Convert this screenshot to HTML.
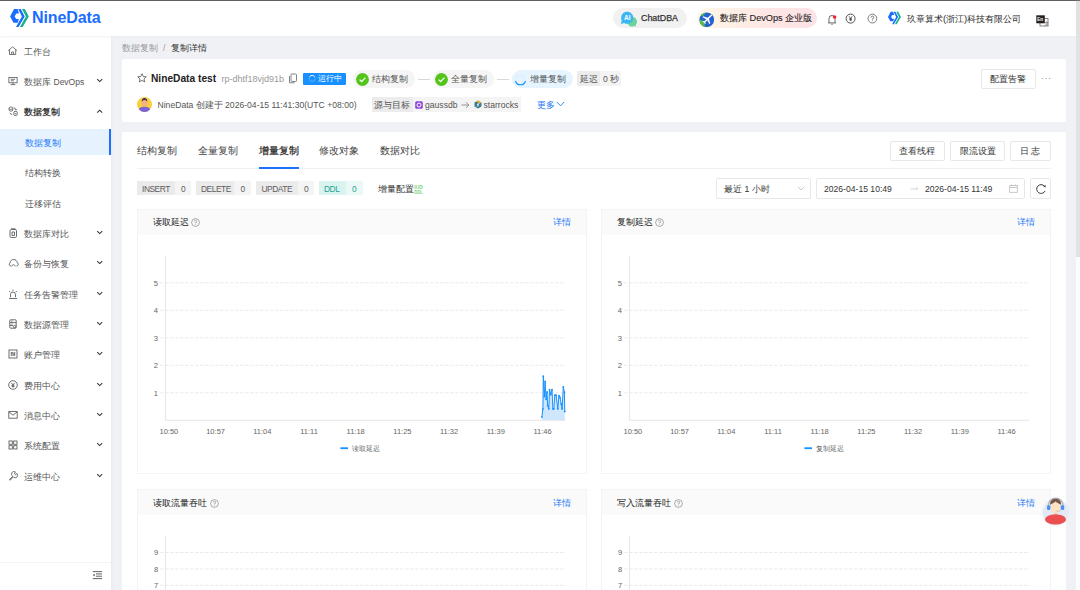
<!DOCTYPE html>
<html><head><meta charset="utf-8">
<style>
*{box-sizing:border-box;margin:0;padding:0}
html,body{width:1080px;height:590px;overflow:hidden;background:#f0f1f5;font-family:"Liberation Sans",sans-serif;color:#333}
.a{position:absolute;white-space:nowrap}
#top{position:absolute;left:0;top:0;width:1076px;height:36px;background:#fff;border-top:1px solid #606060;z-index:2;box-shadow:0 1px 2px rgba(0,0,0,0.02)}
#side{position:absolute;left:0;top:36px;width:111px;height:554px;background:#fff;box-shadow:1px 0 3px rgba(0,0,0,0.03);z-index:1}
#sb{position:absolute;left:1076px;top:0;width:4px;height:590px;background:#fdfdfd}
#sbt{position:absolute;left:1076px;top:1px;width:4px;height:256px;background:#e2e2e2}
.mi{position:absolute;left:0;width:111px;height:30px;font-size:9px;color:#555;line-height:30px}
.mi .t{position:absolute;left:24px;top:0}
.mi .ic{position:absolute;left:8px;top:10px;width:10px;height:10px}
.mi .ch{position:absolute;left:96px;top:12px;width:7px;height:5px}
.card{position:absolute;background:#fff;border-radius:2px}
.tag{position:absolute;height:14px;line-height:14px;font-size:7.5px;color:#666}
.btn{position:absolute;height:20px;border:1px solid #e8e8e8;border-radius:2px;background:#fff;font-size:8.6px;color:#333;text-align:center;line-height:18px}
.cc{position:absolute;border:1px solid #f3f3f3;background:#fff}
.cc .hd{position:absolute;left:0;top:0;right:0;height:25.2px;background:#fafafa}
.cc .ti{position:absolute;left:15px;top:0;line-height:26px;font-size:8.8px;color:#333}
.cc .dt{position:absolute;right:15px;top:0;line-height:26px;font-size:8.8px;color:#1f7af5}
</style></head><body>
<div id="top">
<svg class="a" style="left:6px;top:5px" width="30" height="24" viewBox="0 0 30 24"><path fill="#1a6dff" d="M4.1,10.4 L8,3 L11.6,3 L13,7.6 L10.2,7.6 L8.7,10.4 L10.2,13 L12.8,13 L11.8,16.7 L7.5,16.7 Z"/><path fill="#1a6dff" d="M12.2,3 L14.8,3 L18.7,10.4 L12.6,20.9 L10,20.9 L15.9,10.4 Z"/><path fill="#17b288" d="M16,3 L18.9,3 L22.8,10.4 L16.7,20.9 L14,20.9 L19.9,10.4 Z"/></svg>
<div class="a" style="left:32px;top:8px;font-size:16px;line-height:18px;font-weight:700;color:#1a6dff;letter-spacing:-0.1px">NineData</div>
<div class="a" style="left:613px;top:7px;width:74px;height:20px;border-radius:10px;background:#f1f1f2"></div>
<svg class="a" style="left:619px;top:9px" width="18" height="18" viewBox="0 0 18 18"><path fill="#68d39a" d="M8.2,12.2 A4.9,4.9 0 1,1 16.6,15 L17.3,16.5 L15.2,16.1 A4.9,4.9 0 0,1 8.2,12.2 Z"/><path fill="#3bb6f3" d="M2.1,7.7 A6.1,6.1 0 1,1 5.1,13 L1.8,13.9 L2.7,10.6 A6.1,6.1 0 0,1 2.1,7.7 Z"/><text x="8.2" y="10.2" font-size="6.6" font-weight="700" fill="#fff" text-anchor="middle" font-family="Liberation Sans">AI</text></svg>
<div class="a" style="left:641px;top:11px;font-size:8.9px;line-height:12px;color:#333;-webkit-text-stroke:0.25px #333">ChatDBA</div>
<div class="a" style="left:697px;top:7px;width:120px;height:20px;border-radius:10px;background:linear-gradient(90deg,#fdf8e6,#fde6e4 60%,#fde2e6)"></div>
<svg class="a" style="left:699.3px;top:10.6px" width="15.5" height="15.5" viewBox="0 0 16 16"><circle cx="8" cy="8" r="7.6" fill="#2463d1"/><path fill="#56bb4a" d="M0.6,8.5 C2.2,7.8 4.2,9 5.2,10.2 C6.3,11.6 5.6,13.6 6.4,15.5 C3.2,15 1,12.2 0.6,8.5Z"/><path fill="#56bb4a" d="M2.2,3.5 C3.5,2 5,1.3 6.5,0.9 C6.2,2.3 5,3.8 3.4,4.4Z"/><path fill="#fff" d="M12.8,2.4 L13.7,3.3 L10.3,6.9 L11.6,11.8 L10.6,12.4 L8.6,8.5 L6.6,10.5 L6.9,12 L6.1,12.5 L5.3,10.8 L3.6,10 L4.1,9.2 L5.6,9.5 L7.6,7.5 L3.7,5.5 L4.2,4.5 L9.1,5.9 Z"/></svg>
<div class="a" style="left:720px;top:11px;font-size:9.2px;line-height:12px;color:#222;-webkit-text-stroke:0.1px #222">数据库</div><div class="a" style="left:749.5px;top:11px;font-size:9.2px;line-height:12px;color:#222;-webkit-text-stroke:0.1px #222">DevOps</div><div class="a" style="left:785.3px;top:11px;font-size:9.2px;line-height:12px;color:#222;-webkit-text-stroke:0.1px #222">企业版</div>
<svg class="a" style="left:826px;top:12px" width="12" height="13" viewBox="0 0 12 13"><path fill="none" stroke="#444" stroke-width="0.8" d="M3,9.8 L3,5.5 A3,3 0 0,1 9,5.5 L9,9.8 M2,9.9 L10,9.9 M5.2,11.2 L6.8,11.2"/><circle cx="8.6" cy="4" r="1.8" fill="#f5222d"/></svg>
<svg class="a" style="left:845px;top:12.2px" width="11" height="11" viewBox="0 0 11 11"><circle cx="5.6" cy="5.6" r="4.5" fill="none" stroke="#333" stroke-width="0.85"/><path fill="none" stroke="#333" stroke-width="0.75" d="M4,3.3 L5.6,5.4 L7.2,3.3 M5.6,5.4 L5.6,8 M4.2,5.8 L7,5.8 M4.2,6.9 L7,6.9"/></svg>
<svg class="a" style="left:867px;top:12.2px" width="11" height="11" viewBox="0 0 11 11"><circle cx="5.4" cy="5.6" r="4.4" fill="none" stroke="#555" stroke-width="0.75"/><path fill="none" stroke="#555" stroke-width="0.75" d="M4.1,4.5 A1.35,1.35 0 1,1 5.4,5.9 L5.4,6.6"/><circle cx="5.4" cy="7.8" r="0.45" fill="#555"/></svg>
<svg class="a" style="left:886.5px;top:9px" width="16" height="16" viewBox="0 0 30 30"><g transform="translate(-3.5,-0.5) scale(1.3)"><path fill="#1a6dff" d="M4.1,10.4 L8,3 L11.6,3 L13,7.6 L10.2,7.6 L8.7,10.4 L10.2,13 L12.8,13 L11.8,16.7 L7.5,16.7 Z"/><path fill="#1a6dff" d="M12.2,3 L14.8,3 L18.7,10.4 L12.6,20.9 L10,20.9 L15.9,10.4 Z"/><path fill="#17b288" d="M16,3 L18.9,3 L22.8,10.4 L16.7,20.9 L14,20.9 L19.9,10.4 Z"/></g></svg>
<div class="a" style="left:907px;top:11px;font-size:9.4px;line-height:13px;color:#2a2a2a">玖章算术</div><div class="a" style="left:943px;top:11px;font-size:9.4px;line-height:13px;color:#2a2a2a">(</div><div class="a" style="left:946.1px;top:11px;font-size:9.4px;line-height:13px;color:#2a2a2a">浙江</div><div class="a" style="left:964.1px;top:11px;font-size:9.4px;line-height:13px;color:#2a2a2a">)</div><div class="a" style="left:967.2px;top:11px;font-size:9.4px;line-height:13px;color:#2a2a2a">科技有限公司</div>
<svg class="a" style="left:1036px;top:14px" width="13" height="12" viewBox="0 0 13 12"><rect x="4" y="3.5" width="8" height="7.5" fill="#fff" stroke="#555" stroke-width="0.7"/><text x="8.3" y="9.5" font-size="5" fill="#333" font-family="Liberation Sans">文</text><rect x="0.3" y="0.3" width="8.5" height="8" fill="#222"/><text x="1.3" y="6.3" font-size="4.5" font-weight="700" fill="#fff" font-family="Liberation Sans">En</text></svg>
</div>
<div id="side">
<div class="a" style="left:0;top:0;width:111px;height:2px;background:linear-gradient(#f6f7f7,#fcfcfc)"></div><svg class="a" style="left:7px;top:10px" width="11" height="10" viewBox="0 0 11 10"><path stroke="#555" stroke-width="0.8" fill="none" stroke-linejoin="round" d="M1.2,4.7 L5.6,0.8 L10,4.7 M2.5,3.8 L2.5,8.5 L8.7,8.5 L8.7,3.8 M4.6,8.5 L4.6,6 L6.6,6 L6.6,8.5"/></svg><div class="a" style="left:24px;top:9.5px;font-size:9px;line-height:12px;color:#555">工作台</div>
<svg class="a" style="left:7.5px;top:40px" width="10" height="10" viewBox="0 0 10 10"><rect stroke="#555" stroke-width="0.8" fill="none" x="0.9" y="1.4" width="8.2" height="5.4"/><path stroke="#555" stroke-width="0.8" fill="none" d="M5,6.8 L5,8.6 M2.6,8.6 L7.4,8.6 M2.8,3.3 L7.2,3.3 M2.8,4.8 L5.8,4.8"/></svg><div class="a" style="left:24px;top:39.5px;font-size:9px;line-height:12px;color:#555">数据库</div><div class="a" style="left:53.5px;top:39.8px;font-size:8.5px;line-height:12px;color:#555">DevOps</div><svg class="a" style="left:96px;top:42px" width="7" height="5" viewBox="0 0 7 5"><path d="M1.2,1.2 L3.7,3.6 L6.2,1.2" fill="none" stroke="#333" stroke-width="1.05"/></svg>
<svg class="a" style="left:7.5px;top:70px" width="10" height="10" viewBox="0 0 10 10"><rect x="1.1" y="1.1" width="3.6" height="4" rx="1.3" fill="none" stroke="#555" stroke-width="0.85"/><path d="M1.1,2.6 A1.8,0.8 0 0,0 4.7,2.6" fill="none" stroke="#555" stroke-width="0.7"/><rect x="5.9" y="5.4" width="3.3" height="4" rx="0.9" fill="none" stroke="#555" stroke-width="0.85"/><path d="M6.8,7.6 L8.3,7.6" stroke="#555" stroke-width="0.7"/><path d="M5.7,1.8 Q7.3,1.8 7.8,3.5" fill="none" stroke="#555" stroke-width="0.8"/><path d="M7,3.2 L7.9,4.2 L8.7,3" fill="#555" stroke="#555" stroke-width="0.4"/><path d="M1.8,6.8 Q2.3,8.5 4.3,8.6" fill="none" stroke="#555" stroke-width="0.8"/></svg><div class="a" style="left:24px;top:69.5px;font-size:9px;line-height:12px;color:#1a1a1a;font-weight:500;-webkit-text-stroke:0.2px #1a1a1a">数据复制</div><svg class="a" style="left:96px;top:73px" width="7" height="5" viewBox="0 0 7 5"><path d="M1.2,3.6 L3.7,1.2 L6.2,3.6" fill="none" stroke="#333" stroke-width="1.05"/></svg>
<svg class="a" style="left:7.5px;top:192px" width="10" height="10" viewBox="0 0 10 10"><rect stroke="#555" stroke-width="0.85" fill="none" x="2" y="1.5" width="6.5" height="8" rx="1.3"/><path stroke="#555" stroke-width="0.85" fill="none" d="M3,0.8 L7.5,0.8 M4,4 L6.5,4 L6.5,7.5 L4,7.5 Z"/></svg><div class="a" style="left:24px;top:191.5px;font-size:9px;line-height:12px;color:#555">数据库对比</div><svg class="a" style="left:96px;top:194px" width="7" height="5" viewBox="0 0 7 5"><path d="M1.2,1.2 L3.7,3.6 L6.2,1.2" fill="none" stroke="#333" stroke-width="1.05"/></svg>
<svg class="a" style="left:7.8px;top:222px" width="11" height="10" viewBox="0 0 10 10"><path stroke="#555" stroke-width="0.85" fill="none" d="M2.6,8 C0.6,8 0,5.8 1.6,5 C1.6,2.4 3.6,1.4 5.2,1.6 C7,1.5 8.6,2.8 8.7,4.6 C10.4,5.2 10.2,8 8,8 M3.3,8.4 C3.4,6.2 6.6,6.2 6.7,8.4"/></svg><div class="a" style="left:24px;top:221.5px;font-size:9px;line-height:12px;color:#555">备份与恢复</div><svg class="a" style="left:96px;top:224px" width="7" height="5" viewBox="0 0 7 5"><path d="M1.2,1.2 L3.7,3.6 L6.2,1.2" fill="none" stroke="#333" stroke-width="1.05"/></svg>
<svg class="a" style="left:7.5px;top:253px" width="10" height="10" viewBox="0 0 10 10"><path stroke="#555" stroke-width="0.85" fill="none" d="M2.5,8.2 L2.5,5.5 A2.5,2.5 0 0,1 7.5,5.5 L7.5,8.2 M1,9.5 L9,9.5 M5,0.5 L5,1.8 M1.2,2 L2.2,3 M8.8,2 L7.8,3"/></svg><div class="a" style="left:24px;top:252.5px;font-size:9px;line-height:12px;color:#555">任务告警管理</div><svg class="a" style="left:96px;top:255px" width="7" height="5" viewBox="0 0 7 5"><path d="M1.2,1.2 L3.7,3.6 L6.2,1.2" fill="none" stroke="#333" stroke-width="1.05"/></svg>
<svg class="a" style="left:7.5px;top:283px" width="10" height="10" viewBox="0 0 10 10"><rect stroke="#555" stroke-width="0.85" fill="none" x="1.8" y="0.8" width="6.4" height="8.4" rx="0.8"/><path stroke="#555" stroke-width="0.85" fill="none" d="M1.8,3.6 L8.2,3.6 M1.8,6.4 L5,6.4 M3.3,2.2 L4.5,2.2 M3.3,5 L4.5,5"/><circle stroke="#555" stroke-width="0.85" fill="none" cx="6.6" cy="7.6" r="1.2"/></svg><div class="a" style="left:24px;top:282.5px;font-size:9px;line-height:12px;color:#555">数据源管理</div><svg class="a" style="left:96px;top:285px" width="7" height="5" viewBox="0 0 7 5"><path d="M1.2,1.2 L3.7,3.6 L6.2,1.2" fill="none" stroke="#333" stroke-width="1.05"/></svg>
<svg class="a" style="left:7.5px;top:313px" width="10" height="10" viewBox="0 0 10 10"><rect stroke="#555" stroke-width="0.85" fill="none" x="1" y="1" width="8" height="8"/><path stroke="#555" stroke-width="0.85" fill="none" d="M3.3,3 L3.3,7 M6.7,3 L6.7,7 M3.3,4 L5,4 M5,3 L5,7 M6.7,5 L5.2,6"/></svg><div class="a" style="left:24px;top:312.5px;font-size:9px;line-height:12px;color:#555">账户管理</div><svg class="a" style="left:96px;top:315px" width="7" height="5" viewBox="0 0 7 5"><path d="M1.2,1.2 L3.7,3.6 L6.2,1.2" fill="none" stroke="#333" stroke-width="1.05"/></svg>
<svg class="a" style="left:7.5px;top:344px" width="10" height="10" viewBox="0 0 10 10"><circle stroke="#555" stroke-width="0.85" fill="none" cx="5" cy="5" r="4.3"/><path stroke="#555" stroke-width="0.85" fill="none" d="M3.3,2.8 L5,5 L6.7,2.8 M5,5 L5,7.6 M3.6,5.3 L6.4,5.3 M3.6,6.4 L6.4,6.4"/></svg><div class="a" style="left:24px;top:343.5px;font-size:9px;line-height:12px;color:#555">费用中心</div><svg class="a" style="left:96px;top:346px" width="7" height="5" viewBox="0 0 7 5"><path d="M1.2,1.2 L3.7,3.6 L6.2,1.2" fill="none" stroke="#333" stroke-width="1.05"/></svg>
<svg class="a" style="left:7.5px;top:374px" width="10" height="10" viewBox="0 0 10 10"><rect stroke="#555" stroke-width="0.85" fill="none" x="0.8" y="1.6" width="8.4" height="6.6"/><path stroke="#555" stroke-width="0.85" fill="none" d="M1,2 L5,5.2 L9,2"/></svg><div class="a" style="left:24px;top:373.5px;font-size:9px;line-height:12px;color:#555">消息中心</div><svg class="a" style="left:96px;top:376px" width="7" height="5" viewBox="0 0 7 5"><path d="M1.2,1.2 L3.7,3.6 L6.2,1.2" fill="none" stroke="#333" stroke-width="1.05"/></svg>
<svg class="a" style="left:7.5px;top:404px" width="10" height="10" viewBox="0 0 10 10"><rect stroke="#555" stroke-width="0.85" fill="none" x="1" y="1" width="3.3" height="3.3"/><rect stroke="#555" stroke-width="0.85" fill="none" x="5.7" y="1" width="3.3" height="3.3"/><rect stroke="#555" stroke-width="0.85" fill="none" x="1" y="5.7" width="3.3" height="3.3"/><rect stroke="#555" stroke-width="0.85" fill="none" x="5.7" y="5.7" width="3.3" height="3.3"/></svg><div class="a" style="left:24px;top:403.5px;font-size:9px;line-height:12px;color:#555">系统配置</div><svg class="a" style="left:96px;top:406px" width="7" height="5" viewBox="0 0 7 5"><path d="M1.2,1.2 L3.7,3.6 L6.2,1.2" fill="none" stroke="#333" stroke-width="1.05"/></svg>
<svg class="a" style="left:7.5px;top:435px" width="10" height="10" viewBox="0 0 10 10"><path stroke="#555" stroke-width="0.85" fill="none" d="M1.2,8.8 L4.8,5.2 M1.8,9.5 L5.4,5.8 M4.5,5 A2.4,2.4 0 0,1 7.5,1 L6.4,2.8 L7.3,3.7 L9,2.6 A2.4,2.4 0 0,1 5.5,6"/></svg><div class="a" style="left:24px;top:434.5px;font-size:9px;line-height:12px;color:#555">运维中心</div><svg class="a" style="left:96px;top:437px" width="7" height="5" viewBox="0 0 7 5"><path d="M1.2,1.2 L3.7,3.6 L6.2,1.2" fill="none" stroke="#333" stroke-width="1.05"/></svg>
<div class="a" style="left:0;top:93px;width:111px;height:26px;background:#e6f3ff;border-right:2px solid #1f6fff"></div><div class="a" style="left:25px;top:100.5px;font-size:9px;line-height:12px;color:#1f7af5">数据复制</div>
<div class="a" style="left:25px;top:130.5px;font-size:9px;line-height:12px;color:#555">结构转换</div>
<div class="a" style="left:25px;top:161.5px;font-size:9px;line-height:12px;color:#555">迁移评估</div>
<div class="a" style="left:0;top:526px;width:111px;height:1px;background:#f3f3f3"></div><svg class="a" style="left:91.5px;top:535px" width="11" height="10" viewBox="0 0 11 10"><path d="M0.8,0.6 L10,0.6 M4,2.9 L10,2.9 M4,5.2 L10,5.2 M0.8,7.6 L10,7.6" fill="none" stroke="#444" stroke-width="0.85"/><path d="M2.6,2.8 L0.9,4.1 L2.6,5.4Z" fill="#444"/></svg>
</div>
<div id="sb"></div><div id="sbt"></div><div class="a" style="left:1076px;top:0;width:4px;height:1px;background:#707070;z-index:3"></div>
<div class="a" style="left:121.8px;top:42px;font-size:8.5px;color:#999;line-height:12px">数据复制</div><div class="a" style="left:163px;top:42px;font-size:8.5px;color:#999;line-height:12px">/</div><div class="a" style="left:171.3px;top:42px;font-size:8.5px;color:#333;line-height:12px">复制详情</div>
<div class="card" style="left:122px;top:59px;width:944px;height:63px"></div>
<svg class="a" style="left:136.6px;top:73.2px" width="10" height="10" viewBox="0 0 11 11"><path fill="none" stroke="#444" stroke-width="0.8" stroke-linejoin="round" d="M5.5,0.8 L6.9,3.9 L10.2,4.2 L7.7,6.4 L8.4,9.8 L5.5,8.1 L2.6,9.8 L3.3,6.4 L0.8,4.2 L4.1,3.9 Z"/></svg>
<div class="a" style="left:151px;top:72px;font-size:10.2px;line-height:13px;font-weight:700;color:#222">NineData test</div>
<div class="a" style="left:221.5px;top:73px;font-size:9px;line-height:12px;color:#999">rp-dhtf18vjd91b</div>
<svg class="a" style="left:288px;top:73px" width="10" height="11" viewBox="0 0 10 11"><rect x="3" y="1" width="5.5" height="7.5" rx="0.8" fill="none" stroke="#777" stroke-width="0.9"/><path d="M1.5,3 L1.5,9.8 L6.5,9.8" fill="none" stroke="#777" stroke-width="0.9"/></svg>
<div class="a" style="left:302.5px;top:72.5px;width:43px;height:12.7px;background:#1890ff;border-radius:1px"></div>
<svg class="a" style="left:307.5px;top:74.2px" width="9" height="9" viewBox="0 0 9 9"><circle cx="4.2" cy="4.4" r="3" fill="none" stroke="#6fb8ff" stroke-width="0.8"/><path d="M1.8,2.6 A3,3 0 0,1 6.6,2.6" fill="none" stroke="#fff" stroke-width="0.9"/></svg>
<div class="a" style="left:318px;top:73px;font-size:7.6px;line-height:12px;color:#fff">运行中</div>
<div class="a" style="left:353px;top:70px;width:62px;height:18px;border-radius:9px;background:#f5f5f5"></div>
<svg class="a" style="left:355.5px;top:72.5px" width="13" height="13" viewBox="0 0 13 13"><circle cx="6.5" cy="6.5" r="6.4" fill="#52c41a"/><path d="M3.6,6.6 L5.6,8.6 L9.4,4.6" fill="none" stroke="#fff" stroke-width="1.2"/></svg>
<div class="a" style="left:372px;top:73px;font-size:8.8px;line-height:12px;color:#555">结构复制</div>
<div class="a" style="left:418px;top:79px;width:12px;height:1px;background:#d9d9d9"></div>
<div class="a" style="left:432.5px;top:70px;width:61px;height:18px;border-radius:9px;background:#f5f5f5"></div>
<svg class="a" style="left:435px;top:72.5px" width="13" height="13" viewBox="0 0 13 13"><circle cx="6.5" cy="6.5" r="6.4" fill="#52c41a"/><path d="M3.6,6.6 L5.6,8.6 L9.4,4.6" fill="none" stroke="#fff" stroke-width="1.2"/></svg>
<div class="a" style="left:451px;top:73px;font-size:8.8px;line-height:12px;color:#555">全量复制</div>
<div class="a" style="left:497px;top:79px;width:12px;height:1px;background:#d9d9d9"></div>
<div class="a" style="left:512px;top:70px;width:60.5px;height:18px;border-radius:9px;background:#e6f4ff"></div>
<svg class="a" style="left:514px;top:72.5px" width="13" height="13" viewBox="0 0 13 13"><path d="M1.5,8 A5.2,5.2 0 0,0 11.5,8" fill="none" stroke="#1890ff" stroke-width="1.1"/><path d="M11.5,6 A5.2,5.2 0 0,0 1.5,6" fill="none" stroke="#d6ebff" stroke-width="1"/></svg>
<div class="a" style="left:529.5px;top:73px;font-size:8.8px;line-height:12px;color:#555">增量复制</div>
<div class="a" style="left:577px;top:71px;width:23px;height:15px;background:#ececec"></div>
<div class="a" style="left:600px;top:71px;width:21px;height:15px;background:#f4f4f4"></div>
<div class="a" style="left:580px;top:73px;font-size:8.6px;line-height:12px;color:#555">延迟</div>
<div class="a" style="left:603px;top:73px;font-size:8.6px;line-height:12px;color:#555">0</div><div class="a" style="left:610.2px;top:73px;font-size:8.6px;line-height:12px;color:#555">秒</div>
<div class="btn" style="left:980.5px;top:68.8px;width:55px;height:20px">配置告警</div>
<div class="a" style="left:1041px;top:72px;font-size:9px;line-height:12px;color:#888;letter-spacing:0.5px">···</div>
<svg class="a" style="left:136.5px;top:97px" width="15" height="15" viewBox="0 0 15 15"><defs><clipPath id="av"><circle cx="7.5" cy="7.5" r="7.5"/></clipPath></defs><g clip-path="url(#av)"><rect width="15" height="15" fill="#f8cf40"/><path d="M1,15 C1.5,11 4,9.8 7.5,9.8 C11,9.8 13.5,11 14,15Z" fill="#7a62d8"/><ellipse cx="7.5" cy="6" rx="2.6" ry="3.3" fill="#f4b08a"/><path d="M4.8,5 C4.6,2 6,1 7.5,1 C9,1 10.4,2 10.2,5 C9.5,3.5 8.5,3 7.5,3 C6.5,3 5.5,3.5 4.8,5Z" fill="#3e2d5a"/></g></svg>
<div class="a" style="left:157.5px;top:98.5px;font-size:8.6px;line-height:12px;color:#555">NineData</div><div class="a" style="left:195.7px;top:98.5px;font-size:8.6px;line-height:12px;color:#555">创建于</div><div class="a" style="left:225.1px;top:98.5px;font-size:8.6px;line-height:12px;color:#555">2026-04-15 11:41:30(UTC +08:00)</div>
<div class="a" style="left:371.5px;top:97px;width:41px;height:15.4px;background:#ececec"></div>
<div class="a" style="left:412.5px;top:97px;width:108px;height:15.4px;background:#f4f4f4"></div>
<div class="a" style="left:374px;top:98.5px;font-size:8.7px;line-height:12px;color:#555">源与目标</div>
<svg class="a" style="left:415px;top:100.5px" width="8" height="8" viewBox="0 0 8 8"><rect x="0.2" y="0.2" width="7.6" height="7.6" rx="1.5" fill="#8b45d8"/><circle cx="4" cy="4" r="2" fill="none" stroke="#fff" stroke-width="1"/></svg>
<div class="a" style="left:425px;top:98.5px;font-size:8.6px;line-height:12px;color:#555">gaussdb</div>
<svg class="a" style="left:460.5px;top:100.5px" width="9" height="8" viewBox="0 0 9 8"><path d="M0.5,4 L7.8,4 M5,1.2 L7.8,4 L5,6.8" fill="none" stroke="#777" stroke-width="0.75"/></svg>
<svg class="a" style="left:473.5px;top:100.3px" width="8" height="9" viewBox="0 0 8 9"><path d="M4,0.4 L7.5,2.4 L7.5,6.6 L4,8.6 L0.5,6.6 L0.5,2.4Z" fill="#3a7d99"/><path d="M4,0.4 L7.5,2.4 L5.5,3.5 L2.2,1.5Z" fill="#f2b526"/><path d="M5.3,3.3 L3,4.6 L4.8,5 L2.8,6.6" fill="none" stroke="#fff" stroke-width="0.8"/></svg>
<div class="a" style="left:483.5px;top:98.5px;font-size:8.6px;line-height:12px;color:#555">starrocks</div>
<div class="a" style="left:536.5px;top:98.5px;font-size:8.8px;line-height:12px;color:#1f7af5">更多</div>
<svg class="a" style="left:556px;top:101px" width="9" height="6" viewBox="0 0 9 6"><path d="M0.8,1 L4.5,4.8 L8.2,1" fill="none" stroke="#1f7af5" stroke-width="0.9"/></svg>
<div class="card" style="left:122px;top:132px;width:944px;height:470px"></div>
<div class="a" style="left:137px;top:143.5px;font-size:10px;line-height:13px;color:#444">结构复制</div>
<div class="a" style="left:198px;top:143.5px;font-size:10px;line-height:13px;color:#444">全量复制</div>
<div class="a" style="left:258.5px;top:143.5px;font-size:10px;line-height:13px;color:#1a1a1a;font-weight:500;-webkit-text-stroke:0.2px #1a1a1a">增量复制</div>
<div class="a" style="left:319px;top:143.5px;font-size:10px;line-height:13px;color:#444">修改对象</div>
<div class="a" style="left:380px;top:143.5px;font-size:10px;line-height:13px;color:#444">数据对比</div>
<div class="a" style="left:137px;top:168px;width:914px;height:1px;background:#f0f0f0"></div>
<div class="a" style="left:258.5px;top:166.8px;width:40px;height:1.8px;background:#1f6fff"></div>
<div class="btn" style="left:889.5px;top:140.5px;width:55px;height:20px">查看线程</div>
<div class="btn" style="left:950px;top:140.5px;width:55px;height:20px">限流设置</div>
<div class="btn" style="left:1010px;top:140.5px;width:40.5px;height:20px;letter-spacing:2px;text-indent:2px">日志</div>
<div class="a" style="left:137px;top:181.3px;width:38px;height:14px;background:#ebebeb"></div>
<div class="a" style="left:175px;top:181.3px;width:16px;height:14px;background:#f4f4f4"></div>
<div class="a" style="left:142px;top:182.5px;font-size:8.4px;line-height:12px;color:#5c5c5c;letter-spacing:-0.45px">INSERT</div>
<div class="a" style="left:181px;top:182.5px;font-size:8.4px;line-height:12px;color:#5c5c5c">0</div>
<div class="a" style="left:196px;top:181.3px;width:38px;height:14px;background:#ebebeb"></div>
<div class="a" style="left:234px;top:181.3px;width:17px;height:14px;background:#f4f4f4"></div>
<div class="a" style="left:201px;top:182.5px;font-size:8.4px;line-height:12px;color:#5c5c5c;letter-spacing:-0.45px">DELETE</div>
<div class="a" style="left:240.5px;top:182.5px;font-size:8.4px;line-height:12px;color:#5c5c5c">0</div>
<div class="a" style="left:256.3px;top:181.3px;width:41.5px;height:14px;background:#ebebeb"></div>
<div class="a" style="left:297.8px;top:181.3px;width:16.2px;height:14px;background:#f4f4f4"></div>
<div class="a" style="left:261.5px;top:182.5px;font-size:8.4px;line-height:12px;color:#5c5c5c;letter-spacing:-0.45px">UPDATE</div>
<div class="a" style="left:304px;top:182.5px;font-size:8.4px;line-height:12px;color:#5c5c5c">0</div>
<div class="a" style="left:319px;top:181.3px;width:27px;height:14px;background:#d9f3ef"></div>
<div class="a" style="left:346px;top:181.3px;width:16.5px;height:14px;background:#ebf8f6"></div>
<div class="a" style="left:324px;top:182.5px;font-size:8.4px;line-height:12px;color:#25a594;letter-spacing:-0.45px">DDL</div>
<div class="a" style="left:352px;top:182.5px;font-size:8.4px;line-height:12px;color:#25a594">0</div>
<div class="a" style="left:377.5px;top:182.5px;font-size:8.8px;line-height:12px;color:#333;font-weight:500">增量配置</div>
<svg class="a" style="left:413.5px;top:184.5px" width="9" height="10" viewBox="0 0 9 10"><text x="0.3" y="4.4" font-size="5" font-weight="700" fill="#7bd47b" font-family="Liberation Sans" textLength="8.4" lengthAdjust="spacingAndGlyphs">IUD</text><text x="0.3" y="9.4" font-size="5" font-weight="700" fill="#7bd47b" font-family="Liberation Sans" textLength="8.4" lengthAdjust="spacingAndGlyphs">DDL</text></svg>
<div class="a" style="left:716px;top:178.2px;width:95px;height:20.4px;border:1px solid #e8e8e8;border-radius:2px;background:#fff"></div>
<div class="a" style="left:724px;top:182.5px;font-size:8.7px;line-height:12px;color:#333">最近</div><div class="a" style="left:744.4px;top:182.5px;font-size:8.7px;line-height:12px;color:#333">1</div><div class="a" style="left:751.7px;top:182.5px;font-size:8.7px;line-height:12px;color:#333">小时</div>
<svg class="a" style="left:797px;top:185.5px" width="8" height="5" viewBox="0 0 8 5"><path d="M0.8,0.8 L4,4 L7.2,0.8" fill="none" stroke="#bbb" stroke-width="0.8"/></svg>
<div class="a" style="left:816px;top:178.2px;width:208.5px;height:20.4px;border:1px solid #e8e8e8;border-radius:2px;background:#fff"></div>
<div class="a" style="left:824px;top:182.5px;font-size:8.6px;line-height:12px;color:#333">2026-04-15 10:49</div>
<svg class="a" style="left:910px;top:186px" width="9" height="5" viewBox="0 0 9 5"><path d="M0.5,3 L8,3 M6,1.2 L8,3" fill="none" stroke="#ccc" stroke-width="0.8"/></svg>
<div class="a" style="left:925px;top:182.5px;font-size:8.6px;line-height:12px;color:#333">2026-04-15 11:49</div>
<svg class="a" style="left:1009px;top:183.5px" width="9" height="9" viewBox="0 0 9 9"><rect x="0.7" y="1.5" width="7.6" height="6.8" fill="none" stroke="#bbb" stroke-width="0.8"/><path d="M0.7,3.5 L8.3,3.5 M2.5,0.5 L2.5,2 M6.5,0.5 L6.5,2" fill="none" stroke="#bbb" stroke-width="0.8"/></svg>
<div class="a" style="left:1030px;top:178.2px;width:20.5px;height:20.4px;border:1px solid #e8e8e8;border-radius:2px;background:#fff"></div>
<svg class="a" style="left:1034.5px;top:182.5px" width="12" height="12" viewBox="0 0 12 12"><path d="M10.1,7.9 A4.4,4.4 0 1,1 9.4,3.1" fill="none" stroke="#333" stroke-width="0.95"/><path d="M10.6,2 L10.5,4.5 L8.3,3.5Z" fill="#333"/></svg>
<div class="cc" style="left:137px;top:208.5px;width:449.5px;height:265px"><div class="hd"></div></div>
<div class="a" style="left:152.5px;top:215.5px;font-size:8.8px;line-height:12px;color:#222;font-weight:500">读取延迟</div><svg class="a" style="left:191px;top:217.5px" width="9" height="9" viewBox="0 0 9 9"><circle cx="4.5" cy="4.5" r="3.9" fill="none" stroke="#888" stroke-width="0.7"/><path d="M3.3,3.5 A1.2,1.2 0 1,1 4.5,4.7 L4.5,5.4" fill="none" stroke="#888" stroke-width="0.7"/><circle cx="4.5" cy="6.5" r="0.4" fill="#888"/></svg><div class="a" style="left:553px;top:215.5px;font-size:8.8px;line-height:12px;color:#1f7af5">详情</div>
<svg class="a" style="left:137px;top:240px" width="450" height="220" viewBox="137 240 450 220"><line x1="165.4" y1="255.6" x2="165.4" y2="420.3" stroke="#e6e6e6" stroke-width="1"/><line x1="165.4" y1="420.3" x2="565.4" y2="420.3" stroke="#e6e6e6" stroke-width="1"/><line x1="160.1" y1="392.8" x2="565.4" y2="392.8" stroke="#e6e6e6" stroke-width="0.8" stroke-dasharray="3.5,1.5"/><text x="158" y="395.5" font-size="7.6" fill="#666" text-anchor="end" font-family="Liberation Sans">1</text><line x1="160.1" y1="365.3" x2="565.4" y2="365.3" stroke="#e6e6e6" stroke-width="0.8" stroke-dasharray="3.5,1.5"/><text x="158" y="368.0" font-size="7.6" fill="#666" text-anchor="end" font-family="Liberation Sans">2</text><line x1="160.1" y1="337.8" x2="565.4" y2="337.8" stroke="#e6e6e6" stroke-width="0.8" stroke-dasharray="3.5,1.5"/><text x="158" y="340.5" font-size="7.6" fill="#666" text-anchor="end" font-family="Liberation Sans">3</text><line x1="160.1" y1="310.3" x2="565.4" y2="310.3" stroke="#e6e6e6" stroke-width="0.8" stroke-dasharray="3.5,1.5"/><text x="158" y="313.0" font-size="7.6" fill="#666" text-anchor="end" font-family="Liberation Sans">4</text><line x1="160.1" y1="282.8" x2="565.4" y2="282.8" stroke="#e6e6e6" stroke-width="0.8" stroke-dasharray="3.5,1.5"/><text x="158" y="285.5" font-size="7.6" fill="#666" text-anchor="end" font-family="Liberation Sans">5</text><text x="168.9" y="434" font-size="7.5" fill="#666" text-anchor="middle" font-family="Liberation Sans">10:50</text><text x="215.60000000000002" y="434" font-size="7.5" fill="#666" text-anchor="middle" font-family="Liberation Sans">10:57</text><text x="262.3" y="434" font-size="7.5" fill="#666" text-anchor="middle" font-family="Liberation Sans">11:04</text><text x="309.0" y="434" font-size="7.5" fill="#666" text-anchor="middle" font-family="Liberation Sans">11:11</text><text x="355.70000000000005" y="434" font-size="7.5" fill="#666" text-anchor="middle" font-family="Liberation Sans">11:18</text><text x="402.4" y="434" font-size="7.5" fill="#666" text-anchor="middle" font-family="Liberation Sans">11:25</text><text x="449.1" y="434" font-size="7.5" fill="#666" text-anchor="middle" font-family="Liberation Sans">11:32</text><text x="495.80000000000007" y="434" font-size="7.5" fill="#666" text-anchor="middle" font-family="Liberation Sans">11:39</text><text x="542.5" y="434" font-size="7.5" fill="#666" text-anchor="middle" font-family="Liberation Sans">11:46</text><polygon points="541.9,420.3 541.9,417.1 542.9,408.9 543.3,376.2 544.4,396.5 545.1,381.4 546.1,399.3 547,392 547.7,405.7 548.8,408.9 549.5,389.7 550.8,394.7 552,389.7 552.9,408.9 553.8,408.9 554.8,395.2 556.1,395.2 557.8,408.9 558.9,395.6 560,397.4 561.2,403.9 562.1,408.9 563.3,386.9 564.4,392.4 564.8,411.6 564.8,420.3" fill="#cfe7fc"/><polyline points="541.9,417.1 542.9,408.9 543.3,376.2 544.4,396.5 545.1,381.4 546.1,399.3 547,392 547.7,405.7 548.8,408.9 549.5,389.7 550.8,394.7 552,389.7 552.9,408.9 553.8,408.9 554.8,395.2 556.1,395.2 557.8,408.9 558.9,395.6 560,397.4 561.2,403.9 562.1,408.9 563.3,386.9 564.4,392.4 564.8,411.6" fill="none" stroke="#1890ff" stroke-width="1"/><circle cx="541.9" cy="417.1" r="0.9" fill="#1890ff"/><circle cx="542.9" cy="408.9" r="0.9" fill="#1890ff"/><circle cx="543.3" cy="376.2" r="0.9" fill="#1890ff"/><circle cx="544.4" cy="396.5" r="0.9" fill="#1890ff"/><circle cx="545.1" cy="381.4" r="0.9" fill="#1890ff"/><circle cx="546.1" cy="399.3" r="0.9" fill="#1890ff"/><circle cx="547" cy="392" r="0.9" fill="#1890ff"/><circle cx="547.7" cy="405.7" r="0.9" fill="#1890ff"/><circle cx="548.8" cy="408.9" r="0.9" fill="#1890ff"/><circle cx="549.5" cy="389.7" r="0.9" fill="#1890ff"/><circle cx="550.8" cy="394.7" r="0.9" fill="#1890ff"/><circle cx="552" cy="389.7" r="0.9" fill="#1890ff"/><circle cx="552.9" cy="408.9" r="0.9" fill="#1890ff"/><circle cx="553.8" cy="408.9" r="0.9" fill="#1890ff"/><circle cx="554.8" cy="395.2" r="0.9" fill="#1890ff"/><circle cx="556.1" cy="395.2" r="0.9" fill="#1890ff"/><circle cx="557.8" cy="408.9" r="0.9" fill="#1890ff"/><circle cx="558.9" cy="395.6" r="0.9" fill="#1890ff"/><circle cx="560" cy="397.4" r="0.9" fill="#1890ff"/><circle cx="561.2" cy="403.9" r="0.9" fill="#1890ff"/><circle cx="562.1" cy="408.9" r="0.9" fill="#1890ff"/><circle cx="563.3" cy="386.9" r="0.9" fill="#1890ff"/><circle cx="564.4" cy="392.4" r="0.9" fill="#1890ff"/><circle cx="564.8" cy="411.6" r="0.9" fill="#1890ff"/><line x1="340.4" y1="448.2" x2="348" y2="448.2" stroke="#1890ff" stroke-width="1.8"/><text x="351.5" y="450.6" font-size="7.2" fill="#666" font-family="Liberation Sans">读取延迟</text></svg>
<div class="cc" style="left:601px;top:208.5px;width:449.5px;height:265px"><div class="hd"></div></div>
<div class="a" style="left:616.5px;top:215.5px;font-size:8.8px;line-height:12px;color:#222;font-weight:500">复制延迟</div><svg class="a" style="left:655px;top:217.5px" width="9" height="9" viewBox="0 0 9 9"><circle cx="4.5" cy="4.5" r="3.9" fill="none" stroke="#888" stroke-width="0.7"/><path d="M3.3,3.5 A1.2,1.2 0 1,1 4.5,4.7 L4.5,5.4" fill="none" stroke="#888" stroke-width="0.7"/><circle cx="4.5" cy="6.5" r="0.4" fill="#888"/></svg><div class="a" style="left:1017px;top:215.5px;font-size:8.8px;line-height:12px;color:#1f7af5">详情</div>
<svg class="a" style="left:601px;top:240px" width="450" height="220" viewBox="601 240 450 220"><line x1="629.4" y1="255.6" x2="629.4" y2="420.3" stroke="#e6e6e6" stroke-width="1"/><line x1="629.4" y1="420.3" x2="1029.4" y2="420.3" stroke="#e6e6e6" stroke-width="1"/><line x1="624.1" y1="392.8" x2="1029.4" y2="392.8" stroke="#e6e6e6" stroke-width="0.8" stroke-dasharray="3.5,1.5"/><text x="622" y="395.5" font-size="7.6" fill="#666" text-anchor="end" font-family="Liberation Sans">1</text><line x1="624.1" y1="365.3" x2="1029.4" y2="365.3" stroke="#e6e6e6" stroke-width="0.8" stroke-dasharray="3.5,1.5"/><text x="622" y="368.0" font-size="7.6" fill="#666" text-anchor="end" font-family="Liberation Sans">2</text><line x1="624.1" y1="337.8" x2="1029.4" y2="337.8" stroke="#e6e6e6" stroke-width="0.8" stroke-dasharray="3.5,1.5"/><text x="622" y="340.5" font-size="7.6" fill="#666" text-anchor="end" font-family="Liberation Sans">3</text><line x1="624.1" y1="310.3" x2="1029.4" y2="310.3" stroke="#e6e6e6" stroke-width="0.8" stroke-dasharray="3.5,1.5"/><text x="622" y="313.0" font-size="7.6" fill="#666" text-anchor="end" font-family="Liberation Sans">4</text><line x1="624.1" y1="282.8" x2="1029.4" y2="282.8" stroke="#e6e6e6" stroke-width="0.8" stroke-dasharray="3.5,1.5"/><text x="622" y="285.5" font-size="7.6" fill="#666" text-anchor="end" font-family="Liberation Sans">5</text><text x="632.9" y="434" font-size="7.5" fill="#666" text-anchor="middle" font-family="Liberation Sans">10:50</text><text x="679.6" y="434" font-size="7.5" fill="#666" text-anchor="middle" font-family="Liberation Sans">10:57</text><text x="726.3" y="434" font-size="7.5" fill="#666" text-anchor="middle" font-family="Liberation Sans">11:04</text><text x="773.0" y="434" font-size="7.5" fill="#666" text-anchor="middle" font-family="Liberation Sans">11:11</text><text x="819.7" y="434" font-size="7.5" fill="#666" text-anchor="middle" font-family="Liberation Sans">11:18</text><text x="866.4" y="434" font-size="7.5" fill="#666" text-anchor="middle" font-family="Liberation Sans">11:25</text><text x="913.1" y="434" font-size="7.5" fill="#666" text-anchor="middle" font-family="Liberation Sans">11:32</text><text x="959.8000000000001" y="434" font-size="7.5" fill="#666" text-anchor="middle" font-family="Liberation Sans">11:39</text><text x="1006.5" y="434" font-size="7.5" fill="#666" text-anchor="middle" font-family="Liberation Sans">11:46</text><line x1="804.4" y1="448.2" x2="812" y2="448.2" stroke="#1890ff" stroke-width="1.8"/><text x="815.5" y="450.6" font-size="7.2" fill="#666" font-family="Liberation Sans">复制延迟</text></svg>
<div class="cc" style="left:137px;top:488.8px;width:449.5px;height:120px"><div class="hd"></div></div>
<div class="a" style="left:152.5px;top:497px;font-size:8.8px;line-height:12px;color:#222;font-weight:500">读取流量吞吐</div><svg class="a" style="left:209.5px;top:498.5px" width="9" height="9" viewBox="0 0 9 9"><circle cx="4.5" cy="4.5" r="3.9" fill="none" stroke="#888" stroke-width="0.7"/><path d="M3.3,3.5 A1.2,1.2 0 1,1 4.5,4.7 L4.5,5.4" fill="none" stroke="#888" stroke-width="0.7"/><circle cx="4.5" cy="6.5" r="0.4" fill="#888"/></svg><div class="a" style="left:553px;top:497px;font-size:8.8px;line-height:12px;color:#1f7af5">详情</div>
<svg class="a" style="left:137px;top:520px" width="450" height="70" viewBox="137 520 450 70"><line x1="165.4" y1="536" x2="165.4" y2="600" stroke="#e6e6e6" stroke-width="1"/><line x1="160.1" y1="552.5" x2="565.4" y2="552.5" stroke="#e6e6e6" stroke-width="0.8" stroke-dasharray="3.5,1.5"/><text x="158.3" y="555.2" font-size="7.6" fill="#666" text-anchor="end" font-family="Liberation Sans">9</text><line x1="160.1" y1="569" x2="565.4" y2="569" stroke="#e6e6e6" stroke-width="0.8" stroke-dasharray="3.5,1.5"/><text x="158.3" y="571.7" font-size="7.6" fill="#666" text-anchor="end" font-family="Liberation Sans">8</text><line x1="160.1" y1="585.3" x2="565.4" y2="585.3" stroke="#e6e6e6" stroke-width="0.8" stroke-dasharray="3.5,1.5"/><text x="158.3" y="588.0" font-size="7.6" fill="#666" text-anchor="end" font-family="Liberation Sans">7</text></svg>
<div class="cc" style="left:601px;top:488.8px;width:449.5px;height:120px"><div class="hd"></div></div>
<div class="a" style="left:616.5px;top:497px;font-size:8.8px;line-height:12px;color:#222;font-weight:500">写入流量吞吐</div><svg class="a" style="left:673.5px;top:498.5px" width="9" height="9" viewBox="0 0 9 9"><circle cx="4.5" cy="4.5" r="3.9" fill="none" stroke="#888" stroke-width="0.7"/><path d="M3.3,3.5 A1.2,1.2 0 1,1 4.5,4.7 L4.5,5.4" fill="none" stroke="#888" stroke-width="0.7"/><circle cx="4.5" cy="6.5" r="0.4" fill="#888"/></svg><div class="a" style="left:1017px;top:497px;font-size:8.8px;line-height:12px;color:#1f7af5">详情</div>
<svg class="a" style="left:601px;top:520px" width="450" height="70" viewBox="601 520 450 70"><line x1="629.4" y1="536" x2="629.4" y2="600" stroke="#e6e6e6" stroke-width="1"/><line x1="624.1" y1="552.5" x2="1029.4" y2="552.5" stroke="#e6e6e6" stroke-width="0.8" stroke-dasharray="3.5,1.5"/><text x="622.3" y="555.2" font-size="7.6" fill="#666" text-anchor="end" font-family="Liberation Sans">9</text><line x1="624.1" y1="569" x2="1029.4" y2="569" stroke="#e6e6e6" stroke-width="0.8" stroke-dasharray="3.5,1.5"/><text x="622.3" y="571.7" font-size="7.6" fill="#666" text-anchor="end" font-family="Liberation Sans">8</text><line x1="624.1" y1="585.3" x2="1029.4" y2="585.3" stroke="#e6e6e6" stroke-width="0.8" stroke-dasharray="3.5,1.5"/><text x="622.3" y="588.0" font-size="7.6" fill="#666" text-anchor="end" font-family="Liberation Sans">7</text></svg>
<svg class="a" style="left:1040px;top:494px" width="32" height="34" viewBox="0 0 32 34"><defs><filter id="shd" x="-30%" y="-30%" width="160%" height="160%"><feGaussianBlur stdDeviation="0.8"/></filter></defs><circle cx="15.7" cy="18.6" r="13.3" fill="#dfe6f2" opacity="0.6" filter="url(#shd)"/><circle cx="15.7" cy="18.4" r="12.8" fill="#e3eaf5"/><path d="M8.3,11.5 A7.4,7.4 0 0,1 23.1,11.5" fill="none" stroke="#adb7c4" stroke-width="1.3"/><rect x="14.1" y="16.5" width="3" height="4" fill="#f9d3ae"/><ellipse cx="15.5" cy="25.4" rx="10.5" ry="5.2" fill="#eb4f4f"/><ellipse cx="15.6" cy="13.2" rx="5.3" ry="5.2" fill="#fde3c4"/><path d="M10.1,11 C9.8,6.3 12.5,4.7 15.6,4.7 C18.7,4.7 21.4,6.3 21.1,11 C19.5,9.8 17,9.2 15.6,7.6 C14.2,9.2 11.7,9.8 10.1,11Z" fill="#7b5646"/><rect x="7" y="10.9" width="3.4" height="5.2" rx="1.6" fill="#4b91f1"/><rect x="20.8" y="10.9" width="3.4" height="5.2" rx="1.6" fill="#4b91f1"/><path d="M21.5,15.5 Q20,17.3 16.5,17.4" fill="none" stroke="#9aa3ad" stroke-width="0.5"/></svg></body></html>
